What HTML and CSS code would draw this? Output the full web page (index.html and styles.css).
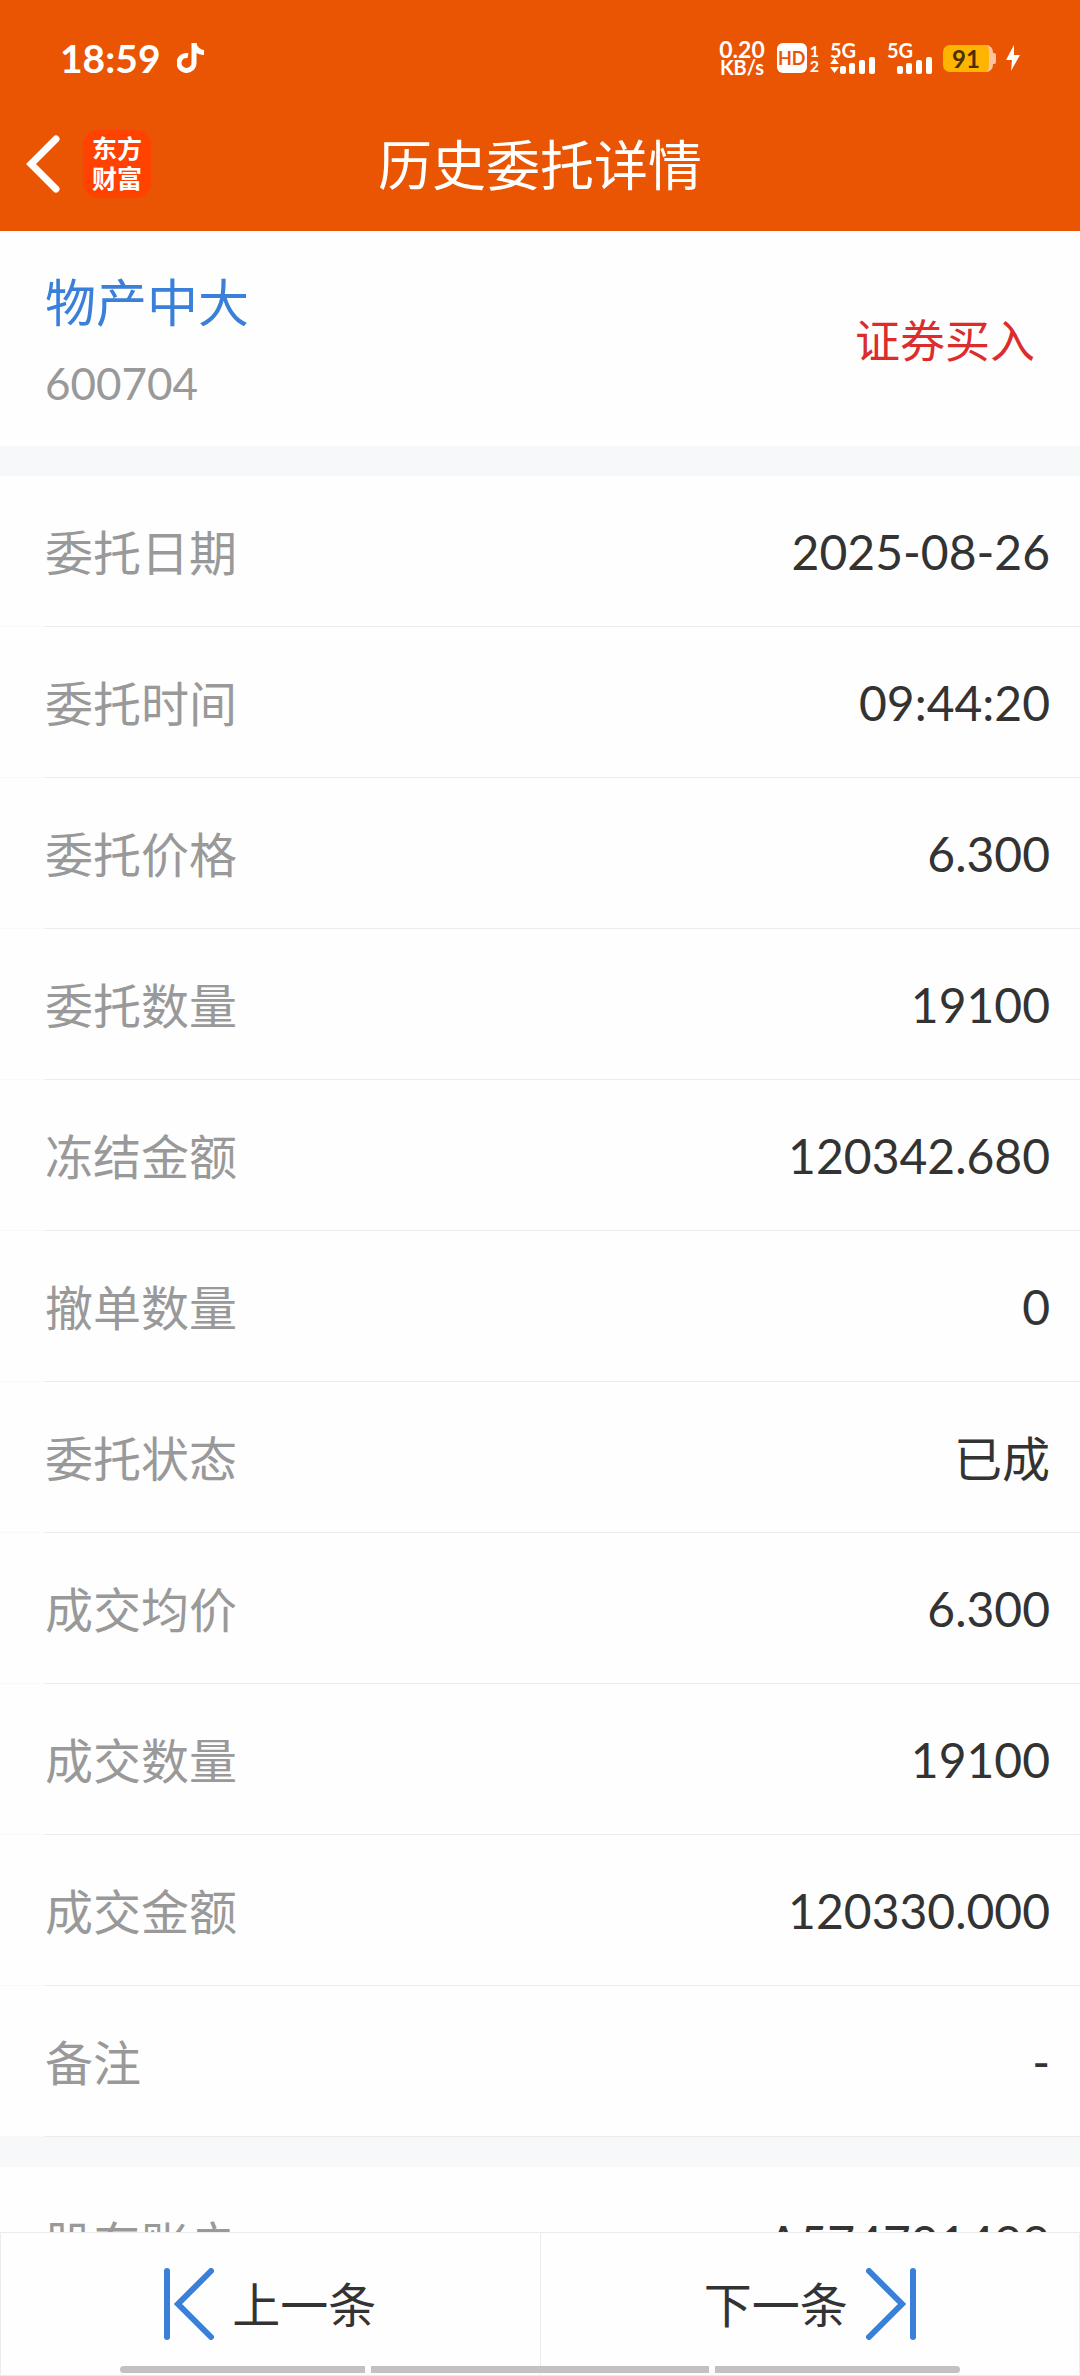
FILE: index.html
```html
<!DOCTYPE html>
<html lang="zh-CN">
<head>
  <meta charset="UTF-8">
  <meta name="viewport" content="width=device-width, initial-scale=1">
  <title>历史委托详情</title>
  <link rel="stylesheet" href="styles.css">
</head>
<body>
  <header class="header">
    <div class="status-bar">
      <span class="clock">18:59</span>
      <svg class="note-icon" width="28" height="32" viewBox="0 0 28 32" aria-hidden="true">
        <path d="M17 1v20a7.500 7.500 0 1 1-6-7.400" fill="none" stroke="#fff" stroke-width="5"/>
        <path d="M15 1h4.500c.6 4 3.500 6.500 7.500 7v5c-3.500 0-6-1-8-2.500z" fill="#fff"/>
      </svg>
      <div class="status-right">
        <div class="speed"><span>0.20</span><span class="unit">KB/s</span></div>
        <div class="hd">
          <span class="hd-box">HD</span>
          <div class="sims"><span>1</span><span>2</span></div>
        </div>
        <div class="signal">
          <span>5G</span>
          <svg width="46" height="17" viewBox="0 0 46 17" aria-hidden="true">
            <path d="M0 7l4.500-6L9 7zM0 10h9l-4.500 6z" fill="#fff"/>
            <g fill="#fff">
              <rect x="10" y="9" width="6" height="8" rx="2"/>
              <rect x="19" y="6" width="6" height="11" rx="2"/>
              <rect x="29" y="3" width="6" height="14" rx="2"/>
              <rect x="39" y="0" width="6" height="17" rx="2"/>
            </g>
          </svg>
        </div>
        <div class="signal">
          <span>5G</span>
          <svg width="46" height="17" viewBox="0 0 46 17" aria-hidden="true">
            <g fill="#fff">
              <rect x="10" y="9" width="6" height="8" rx="2"/>
              <rect x="19" y="6" width="6" height="11" rx="2"/>
              <rect x="29" y="3" width="6" height="14" rx="2"/>
              <rect x="39" y="0" width="6" height="17" rx="2"/>
            </g>
          </svg>
        </div>
        <div class="power">
          <span class="battery">91</span>
          <span class="battery-cap"></span>
        </div>
        <svg class="bolt" width="14" height="26" viewBox="0 0 14 26" aria-hidden="true">
          <path d="M8 0L0 15h6L5 26l9-16H8z" fill="#fff"/>
        </svg>
      </div>
    </div>
    <div class="nav">
      <div class="nav-left">
        <button class="back" type="button" aria-label="返回">
          <svg width="34" height="58" viewBox="0 0 34 58" aria-hidden="true">
            <path d="M30 4L5 29l25 25" fill="none" stroke="#fff" stroke-width="7" stroke-linecap="round"/>
          </svg>
        </button>
        <span class="logo">东方<br>财富</span>
      </div>
      <h1 class="title">历史委托详情</h1>
    </div>
  </header>

  <main class="content">
    <section class="stock">
      <div class="stock-info">
        <a class="stock-name" href="#">物产中大</a>
        <div class="stock-code">600704</div>
      </div>
      <span class="side">证券买入</span>
    </section>

    <dl class="details">
      <div class="row"><dt>委托日期</dt><dd>2025-08-26</dd></div>
      <div class="row"><dt>委托时间</dt><dd>09:44:20</dd></div>
      <div class="row"><dt>委托价格</dt><dd>6.300</dd></div>
      <div class="row"><dt>委托数量</dt><dd>19100</dd></div>
      <div class="row"><dt>冻结金额</dt><dd>120342.680</dd></div>
      <div class="row"><dt>撤单数量</dt><dd>0</dd></div>
      <div class="row"><dt>委托状态</dt><dd class="state">已成</dd></div>
      <div class="row"><dt>成交均价</dt><dd>6.300</dd></div>
      <div class="row"><dt>成交数量</dt><dd>19100</dd></div>
      <div class="row"><dt>成交金额</dt><dd>120330.000</dd></div>
      <div class="row"><dt>备注</dt><dd>-</dd></div>
    </dl>

    <dl class="details">
      <div class="row"><dt>股东账户</dt><dd>A574701499</dd></div>
    </dl>
  </main>

  <footer class="pager">
    <button class="pager-btn" type="button">
      <svg width="50" height="72" viewBox="0 0 50 72" aria-hidden="true">
        <path d="M3 3v66M47 3L14 36l33 33" fill="none" stroke="#3a80d9" stroke-width="6" stroke-linecap="round"/>
      </svg>
      <span>上一条</span>
    </button>
    <button class="pager-btn" type="button">
      <span>下一条</span>
      <svg width="50" height="72" viewBox="0 0 50 72" aria-hidden="true">
        <path d="M47 3v66M3 3l33 33L3 69" fill="none" stroke="#3a80d9" stroke-width="6" stroke-linecap="round"/>
      </svg>
    </button>
    <!-- system gesture bar, drawn over the buttons -->
    <div class="gesture"><i></i><i></i><i></i></div>
  </footer>
</body>
</html>
```
FILE: styles.css
```css
* {
  box-sizing: border-box;
}
body {
  margin: 0;
  height: 100vh;
  display: flex;
  flex-direction: column;
  background: #fefefe;
  color: #333;
  font-family: Lato, "Noto Sans CJK SC", sans-serif;
}
button {
  border: none;
  padding: 0;
  background: none;
  color: inherit;
  font-family: inherit;
}
svg {
  display: block;
}

/* header */
.header {
  flex: none;
  background: #ea5504;
  color: #fff;
}
.status-bar {
  display: flex;
  align-items: center;
  height: 116px;
  padding: 0 60px;
  font-weight: 700;
}
.clock {
  font-size: 39px;
  line-height: 48px;
}
.note-icon {
  margin-left: 16px;
}
.status-right {
  display: flex;
  align-items: center;
  margin-left: auto;
}
.speed {
  display: flex;
  flex-direction: column;
  align-items: center;
  font-size: 23px;
  line-height: 18px;
}
.unit {
  font-size: 20px;
}
.hd {
  display: flex;
  gap: 3px;
  margin-left: 12px;
}
.hd-box {
  width: 30px;
  height: 30px;
  border-radius: 6px;
  background: #fff;
  color: #ea5504;
  font-size: 18px;
  line-height: 30px;
  text-align: center;
}
.sims {
  display: flex;
  flex-direction: column;
  font-size: 16px;
  line-height: 15px;
}
.signal {
  margin-left: 11px;
  font-size: 20px;
  line-height: 14px;
}
.signal span {
  display: block;
}
.power {
  display: flex;
  align-items: center;
  margin-left: 10px;
}
.battery {
  width: 50px;
  height: 27px;
  border-right: 4px solid #fbc3a0;
  border-radius: 7px;
  background: #ffb400;
  color: #4a3000;
  font-size: 24px;
  line-height: 27px;
  text-align: center;
}
.battery-cap {
  width: 3px;
  height: 11px;
  border-radius: 0 2px 2px 0;
  background: #fbc3a0;
}
.bolt {
  margin-left: 10px;
}
.nav {
  display: grid;
  grid-template-columns: 1fr auto 1fr;
  align-items: center;
  height: 115px;
  padding: 0 26px 20px;
}
.nav-left {
  display: flex;
  align-items: center;
  gap: 23px;
}
.logo {
  width: 68px;
  height: 68px;
  padding-top: 2px;
  border-radius: 15px;
  background: #ff4200;
  font-family: "Noto Sans CJK SC", sans-serif;
  font-size: 25px;
  font-weight: 700;
  line-height: 30px;
  text-align: center;
}
.title {
  margin: 0;
  padding-top: 4px;
  font-size: 54px;
  font-weight: 400;
  line-height: 80px;
}

/* content */
.content {
  flex: 1;
  min-height: 0;
  overflow-y: auto;
  scrollbar-width: none;
}
.stock {
  display: flex;
  align-items: center;
  justify-content: space-between;
  height: 215px;
  padding: 0 45px;
}
.stock-info {
  padding-top: 8px;
}
.stock-name {
  display: block;
  color: #3a80d9;
  font-size: 51px;
  line-height: 80px;
  text-decoration: none;
}
.stock-code {
  color: #999;
  font-size: 44px;
  line-height: 80px;
}
.side {
  color: #dc2c2c;
  font-size: 45px;
}
.details {
  margin: 0;
  border-top: 30px solid #f6f8fa;
}
.row {
  display: flex;
  align-items: center;
  justify-content: space-between;
  height: 151px;
  padding: 0 30px 4px 45px;
  background: linear-gradient(90deg, #f9f9f9 45px, #ebebeb 45px) bottom / 100% 1px no-repeat;
}
.row dt {
  color: #999;
  font-size: 48px;
}
.row dd {
  margin: 0;
  padding-top: 4px;
  font-size: 48px;
}
.row .state {
  padding-top: 0;
}

/* bottom buttons */
.pager {
  flex: none;
  position: relative;
  display: flex;
  height: 144px;
}
.pager-btn {
  flex: 1;
  display: flex;
  align-items: center;
  justify-content: center;
  gap: 18px;
  border: 1px solid #ebebeb;
  font-size: 48px;
}
.pager-btn span {
  padding-bottom: 4px;
}
.pager-btn + .pager-btn {
  border-left: none;
}
.gesture {
  position: absolute;
  right: 120px;
  bottom: 3px;
  left: 120px;
  display: grid;
  grid-template-columns: 245fr 338fr 245fr;
  gap: 6px;
}
.gesture i {
  height: 7px;
  background: #c2c2c2;
}
.gesture i:first-child {
  border-radius: 4px 0 0 4px;
}
.gesture i:last-child {
  border-radius: 0 4px 4px 0;
}
```
